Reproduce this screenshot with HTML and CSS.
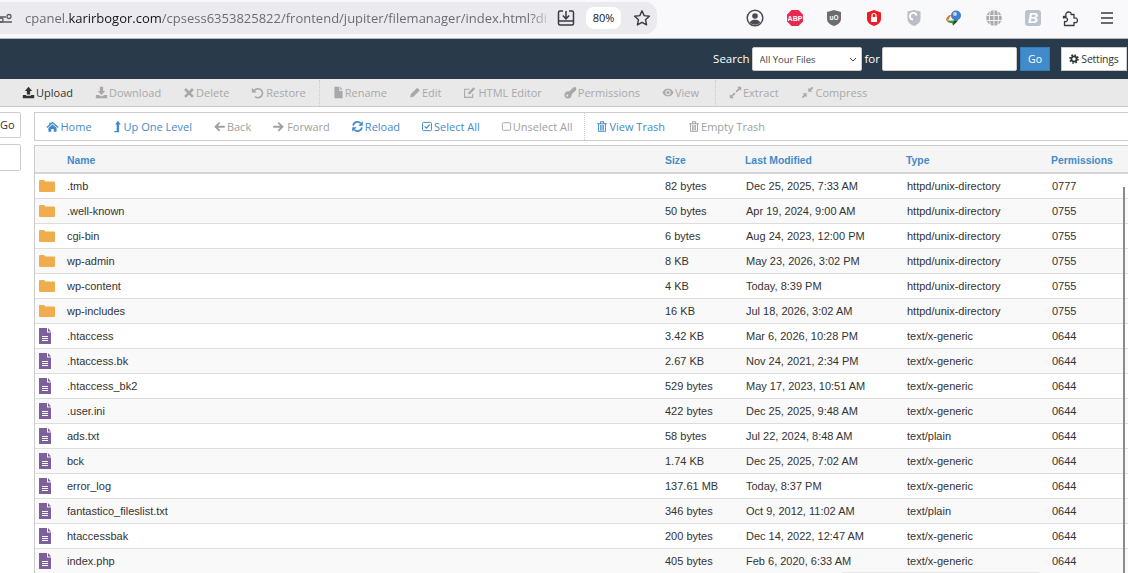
FILE: index.html
```html
<!DOCTYPE html>
<html>
<head>
  <title>File Manager</title>
  <link rel="stylesheet" href="styles.css">
</head>
<body>
  <svg class="sprite" xmlns="http://www.w3.org/2000/svg">
    <symbol id="i-upload" viewBox="0 0 16 16"><path d="M8 1 12.500 6H10v4.500H6V6H3.500ZM1 11h4v1h6v-1h4v4H1Z"/></symbol>
    <symbol id="i-download" viewBox="0 0 16 16"><path d="M6 1h4v5h2.500L8 11 3.500 6H6ZM1 11h3.500L8 13l3.500-2H15v4H1Z"/></symbol>
    <symbol id="i-delete" viewBox="0 0 16 16"><path d="M4 2 8 6l4-4 2.500 2.500-4 4 4 4L12 15l-4-4-4 4-2.500-2.500 4-4-4-4Z"/></symbol>
    <symbol id="i-restore" viewBox="0 0 16 16"><path d="M1 2 7 8H1Z"/><path d="M3.500 7A5.500 5.500 0 1 1 5 13" fill="none" stroke="currentColor" stroke-width="2"/></symbol>
    <symbol id="i-file" viewBox="0 0 12 16"><path d="M1 1h6v5h4v9H1ZM8 1l3 3.500H8Z"/></symbol>
    <symbol id="i-pencil" viewBox="0 0 16 16"><path d="M11 1.500 14.500 5 6 13.500 1.500 14.500 2.500 10Z"/></symbol>
    <symbol id="i-editor" viewBox="0 0 16 16"><path d="M12 9.500V14H2V4h6" fill="none" stroke="currentColor" stroke-width="1.300"/><path d="M13 1.500l2 2L8.500 10h-2V8Z"/></symbol>
    <symbol id="i-key" viewBox="0 0 16 16"><path fill-rule="evenodd" d="M5 6.500a4.500 4.500 0 1 0 4.400 3.700L15 5V1.500h-3.500L6.500 6.700A4.500 4.500 0 0 0 5 6.500ZM4 10.500a1.300 1.300 0 1 1 0 2.600 1.300 1.300 0 0 1 0-2.600Z"/></symbol>
    <symbol id="i-eye" viewBox="0 0 16 16"><path fill-rule="evenodd" d="M.5 8C3 3.500 5.500 3 8 3s5 .5 7.500 5c-2.500 4.500-5 5-7.500 5s-5-.5-7.500-5Zm7.500-3.500a3.500 3.500 0 1 0 0 7 3.500 3.500 0 0 0 0-7Z"/><circle cx="8" cy="8" r="2"/></symbol>
    <symbol id="i-extract" viewBox="0 0 16 16"><path d="M10 1h5v5l-1.800-1.800L9.500 8 8 6.500l3.800-3.700ZM1 15v-5l1.800 1.800L6.500 8 8 9.500l-3.800 3.700L6 15Z"/></symbol>
    <symbol id="i-compress" viewBox="0 0 16 16"><path d="M9 7V2l1.800 1.800L13.500 1 15 2.500l-2.800 2.700L14 7ZM7 9v5l-1.800-1.800L2.500 15 1 13.500l2.800-2.700L2 9Z"/></symbol>
    <symbol id="i-home" viewBox="0 0 16 16"><path d="M8 2 15.500 8.500 14.500 9.700 8 4.200 1.500 9.700.5 8.500 4 5.500V3h1.500v1.200ZM3 9.500l5-4 5 4v5H9.500V11h-3v3.500H3Z"/></symbol>
    <symbol id="i-up" viewBox="0 0 10 16"><path d="M5.500 1 9 5.500H7V15H1v-1.500h3v-8H2Z"/></symbol>
    <symbol id="i-back" viewBox="0 0 16 16"><path d="M7.500 2.500 9 4 6 7h8.500v2.500H6l3 3-1.500 1.500-6-5.750Z"/></symbol>
    <symbol id="i-forward" viewBox="0 0 16 16"><path d="M8.500 2.500 7 4l3 3H1.500v2.500H10l-3 3L8.500 14l6-5.750Z"/></symbol>
    <symbol id="i-reload" viewBox="0 0 16 16"><path d="M14.500 1.500V7H9ZM1.500 14.500V9H7Z"/><path d="M2.500 7A5.500 5.500 0 0 1 12 4.200M13.500 9A5.500 5.500 0 0 1 4 11.800" fill="none" stroke="currentColor" stroke-width="2"/></symbol>
    <symbol id="i-check" viewBox="0 0 16 16"><rect x="2" y="2.500" width="12" height="11" rx="1.500" fill="none" stroke="currentColor" stroke-width="1.300"/><path d="M4.800 7.800 7.300 10.300 11.500 5.500" fill="none" stroke="currentColor" stroke-width="1.600"/></symbol>
    <symbol id="i-square" viewBox="0 0 16 16"><rect x="2" y="2.500" width="12" height="11" rx="1.500" fill="none" stroke="currentColor" stroke-width="1.300"/></symbol>
    <symbol id="i-trash" viewBox="0 0 16 16"><path d="M1.500 3.500h13V5h-13ZM5.500 1h5v2.500H9.300V2.200H6.700v1.300H5.500ZM2.800 5H4v8.800h8V5h1.200v10H2.800ZM5.600 6h1.200v7H5.600ZM7.400 6h1.200v7H7.400ZM9.200 6h1.200v7H9.200Z"/></symbol>
    <symbol id="i-gear" viewBox="0 0 16 16"><circle cx="8" cy="8" r="4.200" fill="none" stroke="currentColor" stroke-width="3"/><circle cx="8" cy="8" r="6.400" fill="none" stroke="currentColor" stroke-width="2.600" stroke-dasharray="2.510 2.510"/></symbol>
    <symbol id="i-folder" viewBox="0 0 16 12"><path d="M0 1a1 1 0 0 1 1-1h4l1.500 1.500H15a1 1 0 0 1 1 1V11a1 1 0 0 1-1 1H1a1 1 0 0 1-1-1Z"/></symbol>
    <symbol id="i-doc" viewBox="0 0 12 16"><path d="M0 0h8v4.500h4V16H0Z"/><path d="M9 0l3 3.500H9Z"/><path d="M3 8h6v1H3ZM3 10h6v1H3ZM3 12h6v1H3Z" fill="#fff"/></symbol>
  </svg>

  <!-- browser toolbar -->
  <div class="browser-bar">
    <div class="url-pill">
      <svg class="site-icon" viewBox="0 0 12 16"><path d="M0 7H6M0 12H12" fill="none" stroke="#5b5b66" stroke-width="1.300"/><circle cx="9" cy="6.500" r="2" fill="none" stroke="#5b5b66" stroke-width="1.300"/><circle cx="1" cy="10" r="2" fill="none" stroke="#5b5b66" stroke-width="1.300"/></svg>
      <div class="url-text">cpanel.<b>karirbogor.com</b>/cpsess6353825822/frontend/jupiter/filemanager/index.html?di</div>
      <svg class="pill-icon" viewBox="0 0 18 18"><path d="M6 2H3a1.500 1.500 0 0 0-1.500 1.500v11A1.500 1.500 0 0 0 3 16h12a1.500 1.500 0 0 0 1.500-1.500v-11A1.500 1.500 0 0 0 15 2h-3M1.500 12h15M9 2v7.500M5.800 6.500 9 9.800l3.200-3.300" fill="none" stroke="#3a3a44" stroke-width="1.500"/></svg>
      <span class="zoom-pct">80%</span>
      <svg class="pill-icon star" viewBox="0 0 18 18"><path d="M9 1.800 11.200 6.600 16.400 7.200 12.500 10.700 13.600 15.900 9 13.300 4.400 15.900 5.500 10.700 1.600 7.200 6.800 6.600Z" fill="none" stroke="#3a3a44" stroke-width="1.400" stroke-linejoin="round"/></svg>
    </div>
    <div class="ext-icons">
      <span class="ext"><svg viewBox="0 0 18 18" width="18" height="18"><circle cx="9" cy="9" r="7.800" fill="none" stroke="#4a4a55" stroke-width="1.500"/><circle cx="9" cy="7" r="2.800" fill="#4a4a55"/><path d="M3.800 13.500C5 11 7 10.800 9 10.800s4 .2 5.200 2.700A7 7 0 0 1 3.800 13.500Z" fill="#4a4a55"/></svg></span>
      <span class="ext"><svg viewBox="0 0 18 18" width="18" height="18"><path d="M5.500 1h7L17 5.500v7L12.500 17h-7L1 12.500v-7Z" fill="#e9294f"/><text x="9" y="11.600" class="ext-text abp">ABP</text></svg></span>
      <span class="ext"><svg viewBox="0 0 18 18" width="18" height="18"><path d="M9 1 16 3v7c0 3.500-3.500 6-7 7-3.500-1-7-3.500-7-7V3Z" fill="#6c6c70"/><text x="9" y="11" class="ext-text uo">uO</text></svg></span>
      <span class="ext"><svg viewBox="0 0 18 18" width="18" height="18"><path d="M9 1 16 3.500v6.500c0 3.500-3.500 6-7 7-3.500-1-7-3.500-7-7V3.500Z" fill="#ec1c24"/><path d="M6 8h6v5H6Z" fill="#fff"/><path d="M7 8V6.500a2 2 0 0 1 4 0V8" fill="none" stroke="#fff" stroke-width="1.200"/></svg></span>
      <span class="ext"><svg viewBox="0 0 18 18" width="18" height="18"><path d="M9 1 15.500 2.500V10c0 3.500-3 5.500-6.500 7-3.500-1.500-6.500-3.500-6.500-7V2.500Z" fill="#b9bec6"/><path d="M11.500 6.500A3.300 3.300 0 1 0 8 10.500" fill="none" stroke="#fff" stroke-width="1.800"/></svg></span>
      <span class="ext"><svg viewBox="0 0 18 18" width="18" height="18"><circle cx="11" cy="6.500" r="5" fill="#3f7fd0"/><circle cx="10" cy="5" r="2" fill="#bcd6f2"/><path d="M1 11C2 6.500 5 5.500 7 6c-2 1-3 3-3 4.500Z" fill="#e0712a"/><path d="M1 11c1.500 2.500 4 3 6 3l1 2.500 5-5H6c-2 0-4 0-5-.5Z" fill="#3e9b2f"/><path d="M8 16.500l5-5H9Z" fill="#1d4f1a"/></svg></span>
      <span class="ext"><svg viewBox="0 0 18 18" width="18" height="18"><circle cx="9" cy="9" r="7.800" fill="#a9a9ad"/><path d="M1.500 6.500h15M1.500 11.500h15M9 1v16M5.500 2c-1.500 4-1.500 10 0 14M12.500 2c1.500 4 1.500 10 0 14" fill="none" stroke="#f2f2f4" stroke-width="1"/></svg></span>
      <span class="ext"><svg viewBox="0 0 18 18" width="18" height="18"><rect x="1" y="1" width="16" height="16" rx="3" fill="#b9c3cf"/><text x="9" y="14" class="ext-text bee">B</text></svg></span>
      <span class="ext"><svg viewBox="0 0 18 18" width="18" height="18"><path d="M1.500 7.500H4c-1-3 1-4.500 2.500-4.500S9.500 3.800 9 5.500H12V9c2-.5 3.500.5 3.500 2.500S14 14 12 13.500V16.500H2.500V12.500C4.500 13 5.500 12 5.500 10.500S4 8 1.500 9Z" fill="none" stroke="#3a3a44" stroke-width="1.300" stroke-linejoin="round"/></svg></span>
      <span class="ext"><svg viewBox="0 0 18 18" width="18" height="18"><path d="M3 4h12M3 9h12M3 14h12" fill="none" stroke="#3a3a44" stroke-width="1.400"/></svg></span>
    </div>
  </div>

  <!-- cpanel top bar -->
  <div class="top-bar">
    <span class="top-label">Search</span>
    <select class="search-scope"><option>All Your Files</option></select>
    <span class="top-label for-label">for</span>
    <input class="search-box" type="text">
    <button class="go-btn">Go</button>
    <button class="settings-btn"><svg class="icon"><use href="#i-gear"/></svg>Settings</button>
  </div>

  <div class="action-bar">
    <a class="tool on"><svg class="icon"><use href="#i-upload"/></svg>Upload</a>
    <a class="tool"><svg class="icon"><use href="#i-download"/></svg>Download</a>
    <a class="tool"><svg class="icon tight"><use href="#i-delete"/></svg>Delete</a>
    <a class="tool"><svg class="icon wide"><use href="#i-restore"/></svg>Restore</a>
    <span class="sep"></span>
    <a class="tool"><svg class="icon small"><use href="#i-file"/></svg>Rename</a>
    <a class="tool"><svg class="icon tight"><use href="#i-pencil"/></svg>Edit</a>
    <a class="tool"><svg class="icon wide"><use href="#i-editor"/></svg>HTML Editor</a>
    <a class="tool"><svg class="icon"><use href="#i-key"/></svg>Permissions</a>
    <a class="tool"><svg class="icon tight"><use href="#i-eye"/></svg>View</a>
    <span class="sep after-view"></span>
    <a class="tool"><svg class="icon"><use href="#i-extract"/></svg>Extract</a>
    <a class="tool"><svg class="icon wide"><use href="#i-compress"/></svg>Compress</a>
  </div>

  <div class="main">
    <div class="side">
      <div class="side-go">Go</div>
      <div class="side-tree"></div>
    </div>
    <div class="content">
      <div class="nav-bar">
        <a class="nav link"><svg class="icon wide"><use href="#i-home"/></svg>Home</a>
        <a class="nav link"><svg class="icon thin"><use href="#i-up"/></svg>Up One Level</a>
        <a class="nav"><svg class="icon"><use href="#i-back"/></svg>Back</a>
        <a class="nav"><svg class="icon wide"><use href="#i-forward"/></svg>Forward</a>
        <a class="nav link"><svg class="icon"><use href="#i-reload"/></svg>Reload</a>
        <a class="nav link"><svg class="icon tight"><use href="#i-check"/></svg>Select All</a>
        <a class="nav"><svg class="icon small"><use href="#i-square"/></svg>Unselect All</a>
        <span class="sep"></span>
        <a class="nav link"><svg class="icon tight"><use href="#i-trash"/></svg>View Trash</a>
        <a class="nav nudge"><svg class="icon tight"><use href="#i-trash"/></svg>Empty Trash</a>
      </div>
      <div class="table-wrap">
        <table class="files">
          <thead>
            <tr><th class="c-icon"></th><th class="c-name">Name</th><th class="c-size">Size</th><th class="c-date">Last Modified</th><th class="c-type">Type</th><th class="c-perm">Permissions</th></tr>
          </thead>
          <tbody>
            <tr><td class="ic"><svg class="folder"><use href="#i-folder"/></svg></td><td>.tmb</td><td>82 bytes</td><td class="in">Dec 25, 2025, 7:33 AM</td><td class="in">httpd/unix-directory</td><td class="in">0777</td></tr>
            <tr><td class="ic"><svg class="folder"><use href="#i-folder"/></svg></td><td>.well-known</td><td>50 bytes</td><td class="in">Apr 19, 2024, 9:00 AM</td><td class="in">httpd/unix-directory</td><td class="in">0755</td></tr>
            <tr><td class="ic"><svg class="folder"><use href="#i-folder"/></svg></td><td>cgi-bin</td><td>6 bytes</td><td class="in">Aug 24, 2023, 12:00 PM</td><td class="in">httpd/unix-directory</td><td class="in">0755</td></tr>
            <tr><td class="ic"><svg class="folder"><use href="#i-folder"/></svg></td><td>wp-admin</td><td>8 KB</td><td class="in">May 23, 2026, 3:02 PM</td><td class="in">httpd/unix-directory</td><td class="in">0755</td></tr>
            <tr><td class="ic"><svg class="folder"><use href="#i-folder"/></svg></td><td>wp-content</td><td>4 KB</td><td class="in">Today, 8:39 PM</td><td class="in">httpd/unix-directory</td><td class="in">0755</td></tr>
            <tr><td class="ic"><svg class="folder"><use href="#i-folder"/></svg></td><td>wp-includes</td><td>16 KB</td><td class="in">Jul 18, 2026, 3:02 AM</td><td class="in">httpd/unix-directory</td><td class="in">0755</td></tr>
            <tr><td class="ic"><svg class="doc"><use href="#i-doc"/></svg></td><td>.htaccess</td><td>3.42 KB</td><td class="in">Mar 6, 2026, 10:28 PM</td><td class="in">text/x-generic</td><td class="in">0644</td></tr>
            <tr><td class="ic"><svg class="doc"><use href="#i-doc"/></svg></td><td>.htaccess.bk</td><td>2.67 KB</td><td class="in">Nov 24, 2021, 2:34 PM</td><td class="in">text/x-generic</td><td class="in">0644</td></tr>
            <tr><td class="ic"><svg class="doc"><use href="#i-doc"/></svg></td><td>.htaccess_bk2</td><td>529 bytes</td><td class="in">May 17, 2023, 10:51 AM</td><td class="in">text/x-generic</td><td class="in">0644</td></tr>
            <tr><td class="ic"><svg class="doc"><use href="#i-doc"/></svg></td><td>.user.ini</td><td>422 bytes</td><td class="in">Dec 25, 2025, 9:48 AM</td><td class="in">text/x-generic</td><td class="in">0644</td></tr>
            <tr><td class="ic"><svg class="doc"><use href="#i-doc"/></svg></td><td>ads.txt</td><td>58 bytes</td><td class="in">Jul 22, 2024, 8:48 AM</td><td class="in">text/plain</td><td class="in">0644</td></tr>
            <tr><td class="ic"><svg class="doc"><use href="#i-doc"/></svg></td><td>bck</td><td>1.74 KB</td><td class="in">Dec 25, 2025, 7:02 AM</td><td class="in">text/x-generic</td><td class="in">0644</td></tr>
            <tr><td class="ic"><svg class="doc"><use href="#i-doc"/></svg></td><td>error_log</td><td>137.61 MB</td><td class="in">Today, 8:37 PM</td><td class="in">text/x-generic</td><td class="in">0644</td></tr>
            <tr><td class="ic"><svg class="doc"><use href="#i-doc"/></svg></td><td>fantastico_fileslist.txt</td><td>346 bytes</td><td class="in">Oct 9, 2012, 11:02 AM</td><td class="in">text/plain</td><td class="in">0644</td></tr>
            <tr><td class="ic"><svg class="doc"><use href="#i-doc"/></svg></td><td>htaccessbak</td><td>200 bytes</td><td class="in">Dec 14, 2022, 12:47 AM</td><td class="in">text/x-generic</td><td class="in">0644</td></tr>
            <tr><td class="ic"><svg class="doc"><use href="#i-doc"/></svg></td><td>index.php</td><td>405 bytes</td><td class="in">Feb 6, 2020, 6:33 AM</td><td class="in">text/x-generic</td><td class="in">0644</td></tr>
          </tbody>
        </table>
        <div class="scroll-thumb"></div>
      </div>
    </div>
  </div>
  <div class="bottom-popup"></div>
</body>
</html>
```

FILE: styles.css
```css
html, body {
  height: 573px;
  overflow: hidden;
}
body {
  margin: 0;
  position: relative;
  background-color: #fff;
  font-family: "Open Sans", sans-serif;
  font-size: 11px;
  color: #333;
}
.sprite {
  display: none;
}
.icon {
  width: 13px;
  height: 13px;
  fill: currentColor;
  flex: none;
  margin-right: 1px;
}
.icon.tight {
  width: 12px;
  margin-right: 1px;
}
.icon.wide {
  margin-right: 2px;
}
.icon.small {
  width: 11px;
  margin-right: 1px;
}
.icon.thin {
  width: 9px;
  margin-right: 2px;
}

/* browser toolbar */
.browser-bar {
  height: 38px;
  background-color: #f9f9fb;
  border-bottom: 1px solid #b8b8bc;
  display: flex;
  align-items: flex-start;
}
.url-pill {
  width: 657px;
  height: 32px;
  margin-top: 2px;
  background-color: #ebebef;
  border-radius: 0 12px 12px 0;
  display: flex;
  align-items: center;
  flex: none;
}
.site-icon {
  width: 12px;
  height: 16px;
  margin-right: 13px;
  flex: none;
}
.url-text {
  width: 527px;
  overflow: hidden;
  white-space: nowrap;
  font-size: 13px;
  color: #6b6b73;
  -webkit-mask-image: linear-gradient(to right, #000 96%, transparent 100%);
  mask-image: linear-gradient(to right, #000 96%, transparent 100%);
}
.url-text b {
  font-weight: normal;
  color: #15141a;
}
.pill-icon {
  width: 18px;
  height: 18px;
  flex: none;
  margin-left: 5px;
}
.zoom-pct {
  width: 35px;
  height: 22px;
  margin-left: 11px;
  background-color: #fff;
  border-radius: 8px;
  text-align: center;
  line-height: 22px;
  font-size: 11px;
  color: #15141a;
}
.pill-icon.star {
  margin-left: 12px;
}
.ext-icons {
  display: flex;
  margin-left: 78px;
  margin-top: 9px;
}
.ext {
  width: 39.800px;
  height: 18px;
  display: flex;
  justify-content: center;
}
.ext:nth-child(9) {
  width: 36px;
}
.ext:nth-child(10) {
  width: 36px;
}
.ext-text {
  font-family: "Liberation Sans", sans-serif;
  font-weight: bold;
  text-anchor: middle;
  fill: #fff;
}
.abp {
  font-size: 7px;
}
.uo {
  font-size: 6.500px;
}
.bee {
  font-size: 14px;
  font-style: italic;
}

/* dark header with search */
.top-bar {
  height: 40px;
  background-color: #293a4a;
  display: flex;
  align-items: center;
  justify-content: flex-end;
  padding-right: 1px;
}
.top-label {
  color: #fff;
  font-size: 11.500px;
  margin-right: 2px;
  margin-bottom: 2px;
}
.for-label {
  margin-left: 3px;
  margin-right: 2px;
}
.search-scope {
  width: 110px;
  height: 24px;
  padding-left: 7px;
  border: 1px solid #ccc;
  border-radius: 2px;
  background: #fff url("data:image/svg+xml,%3Csvg xmlns='http://www.w3.org/2000/svg' width='8' height='5'%3E%3Cpath d='M1 1l3 3 3-3' fill='none' stroke='%23444'/%3E%3C/svg%3E") no-repeat right 4px center;
  -webkit-appearance: none;
  appearance: none;
  font-family: "Open Sans", sans-serif;
  font-size: 9.500px;
  color: #444;
}
.search-box {
  width: 135px;
  height: 24px;
  box-sizing: border-box;
  border: 1px solid #ccc;
  border-radius: 2px;
  padding: 0;
}
.go-btn {
  width: 30px;
  height: 24px;
  margin-left: 3px;
  padding: 0;
  background-color: #428bca;
  border: 1px solid #357ebd;
  color: #fff;
  font-family: "Open Sans", sans-serif;
  font-size: 10.500px;
}
.settings-btn {
  width: 66px;
  height: 24px;
  margin-left: 11px;
  padding: 0;
  background-color: #fff;
  border: 1px solid #ccc;
  color: #333;
  font-family: "Open Sans", sans-serif;
  font-size: 10.500px;
  letter-spacing: -.2px;
  display: flex;
  align-items: center;
  justify-content: center;
}
.settings-btn .icon {
  width: 10px;
  height: 10px;
  margin-right: 2px;
}

/* action toolbar */
.action-bar {
  height: 28px;
  box-sizing: border-box;
  padding-left: 11px;
  background-color: #e9e9e9;
  border-bottom: 1px solid #c9c9c9;
  display: flex;
  align-items: center;
}
.tool {
  display: flex;
  align-items: center;
  padding: 0 11px;
  color: #a8a8a8;
  white-space: nowrap;
}
.tool.on {
  color: #333;
}
.sep {
  width: 0;
  height: 26px;
  border-left: 1px dotted #ccc;
  margin: 0 2px;
}
.sep.after-view {
  margin-left: 5px;
}

/* main area */
.main {
  display: flex;
}
.side {
  width: 34px;
  flex: none;
  padding-top: 5px;
}
.side-go {
  width: 21px;
  height: 26px;
  box-sizing: border-box;
  border: 1px solid #ccc;
  border-left: 0;
  border-radius: 0 2px 2px 0;
  line-height: 24px;
  color: #333;
  text-align: right;
  padding-right: 9px;
}
.side-tree {
  width: 21px;
  height: 27px;
  box-sizing: border-box;
  margin-top: 6px;
  border: 1px solid #ccc;
  border-left: 0;
  border-radius: 0 2px 2px 0;
}
.content {
  flex: 1;
  min-width: 0;
  padding-top: 5px;
}
.nav-bar {
  height: 29px;
  box-sizing: border-box;
  border: 1px solid #ccc;
  border-right: 0;
  display: flex;
  align-items: center;
}
.nav {
  display: flex;
  align-items: center;
  padding: 0 10.500px;
  color: #a0a0a0;
  white-space: nowrap;
}
.nav.link {
  color: #428bca;
}
.nav.nudge {
  margin-left: 2px;
}
.nav-bar .sep {
  height: 27px;
  margin: 0 1px;
}
.table-wrap {
  position: relative;
  margin-top: 4px;
  border-left: 1px solid #ccc;
  border-top: 1px solid #ccc;
}
.files {
  width: 1093px;
  table-layout: fixed;
  border-collapse: collapse;
  font-family: "Liberation Sans", Arial, sans-serif;
  font-size: 11px;
}
.files th {
  height: 24px;
  padding: 2px 0 0;
  background-color: #f5f5f5;
  border-bottom: 2px solid #d5d5d5;
  color: #428bca;
  text-align: left;
  font-size: 10.400px;
  font-weight: bold;
}
.c-icon { width: 32px; }
.c-name { width: 598px; }
.c-size { width: 80px; }
.c-date { width: 161px; }
.c-type { width: 145px; }
.files td {
  height: 24px;
  padding: 0;
  border-bottom: 1px solid #ddd;
  color: #333;
  white-space: nowrap;
}
.files td.in {
  padding-left: 1px;
}
.files tbody tr:nth-child(even) td {
  background-color: #f9f9f9;
}
.files .ic {
  padding-left: 4px;
  line-height: 0;
}
.folder {
  width: 16px;
  height: 12px;
  fill: #f0ad4e;
}
.doc {
  width: 12px;
  height: 16px;
  fill: #7d5f9b;
}
.scroll-thumb {
  position: absolute;
  top: 41px;
  right: 3px;
  width: 2px;
  height: 400px;
  background-color: #8a8a8a;
}
.bottom-popup {
  position: absolute;
  left: 842px;
  bottom: 0;
  width: 198px;
  height: 1px;
  background-color: #e6e6e6;
  border-radius: 4px 4px 0 0;
}
```
